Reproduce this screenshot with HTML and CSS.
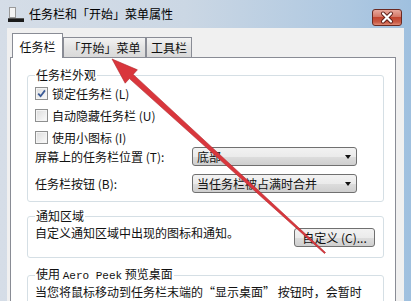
FILE: index.html
```html
<!DOCTYPE html>
<html lang="zh-CN">
<head>
<meta charset="UTF-8">
<meta name="viewport" content="width=device-width, initial-scale=1.0">
<title>任务栏和「开始」菜单属性</title>
<link rel="stylesheet" href="styles.css">
</head>
<body>
  <div class="window">
    <div class="titlebar">
      <svg class="app-icon" width="16" height="16" viewBox="0 0 16 16">
        <rect x="1.5" y="0.5" width="6" height="10" fill="#f4f4f4" stroke="#9a9a9a"/>
        <rect x="0" y="11" width="16" height="4" fill="#1b1b1b"/>
        <rect x="0" y="11" width="16" height="1" fill="#555"/>
      </svg>
      <span class="title">任务栏和「开始」菜单属性</span>
      <div class="close-btn">
        <svg width="28" height="15" viewBox="0 0 28 15">
          <path d="M10 3.5 L18 11.5 M18 3.5 L10 11.5" stroke="#5b1e18" stroke-width="4" stroke-linecap="round"/>
          <path d="M10 3.5 L18 11.5 M18 3.5 L10 11.5" stroke="#fff" stroke-width="2.2" stroke-linecap="round"/>
        </svg>
      </div>
    </div>

    <div class="client">
      <div class="tabs">
        <div class="tab active">任务栏</div>
        <div class="tab tab-start">「开始」菜单</div>
        <div class="tab tab-tools">工具栏</div>
      </div>

      <div class="panel">
        <fieldset class="group group-look">
          <legend>任务栏外观</legend>
          <label class="check">
            <span class="box checked">
              <svg width="9" height="9" viewBox="0 0 9 9"><path d="M1.2 4.6 L3.6 7.2 L8 1.4" fill="none" stroke="#3c5b96" stroke-width="1.8"/></svg>
            </span>锁定任务栏 (L)
          </label>
          <label class="check"><span class="box"></span>自动隐藏任务栏 (U)</label>
          <label class="check"><span class="box"></span>使用小图标 (I)</label>
          <div class="field field-first">
            <span>屏幕上的任务栏位置 (T):</span>
            <div class="select">底部<span class="caret"></span></div>
          </div>
          <div class="field">
            <span>任务栏按钮 (B):</span>
            <div class="select">当任务栏被占满时合并<span class="caret"></span></div>
          </div>
        </fieldset>

        <fieldset class="group group-notify">
          <legend>通知区域</legend>
          <div class="notify-row">
            <span class="notify-text">自定义通知区域中出现的图标和通知。</span>
            <div class="button">自定义 (C)...</div>
          </div>
        </fieldset>

        <fieldset class="group group-peek">
          <legend>使用 <span class="mono">Aero Peek</span> 预览桌面</legend>
          <p class="peek-text">当您将鼠标移动到任务栏末端的“显示桌面” 按钮时，会暂时<br>查看桌面。</p>
        </fieldset>
      </div>
    </div>

    <!-- red annotation arrow drawn over the dialog -->
    <svg class="arrow" width="411" height="301" viewBox="0 0 411 301">
      <polygon points="112,59 125.2,83.2 129.4,78.6 324.5,253.5 325.5,252.5 133.2,74.4 137.4,69.8"
               fill="#d9363c" stroke="#b0262b" stroke-width="0.6" stroke-linejoin="round"/>
    </svg>
  </div>
</body>
</html>
```

FILE: styles.css
```css
html, body {
  margin: 0;
  padding: 0;
}

body {
  width: 411px;
  height: 301px;
  overflow: hidden;
  font-family: "Noto Sans CJK SC", "Noto Sans", sans-serif;
  font-size: 12px;
  color: #111;
}

.window {
  position: relative;
  width: 411px;
  height: 301px;
  display: flex;
  flex-direction: column;
  background: linear-gradient(to right, #d5dde7 0%, #cbd7e4 45%, #aec8e1 85%, #9fc0df 100%);
}

.titlebar {
  height: 28px;
  display: flex;
  align-items: center;
  padding-left: 8px;
  flex-shrink: 0;
}

.app-icon {
  margin-top: 1px;
}

.title {
  margin-left: 5px;
  line-height: 14px;
  color: #000;
}

.close-btn {
  margin-left: auto;
  margin-right: 9px;
  margin-top: 7px;
  width: 28px;
  height: 15px;
  border: 1px solid #6a2a22;
  border-radius: 3px;
  background: linear-gradient(#e9a99d 0%, #d47867 45%, #c2452f 50%, #c85a45 80%, #e08a74 100%);
  display: flex;
}

.client {
  flex: 1;
  margin: 0 7px;
  background: #f0f0f0;
  padding: 5px 8px 0 3px;
  display: flex;
  flex-direction: column;
  overflow: hidden;
}

/* tab strip */
.tabs {
  display: flex;
  align-items: flex-end;
  height: 24px;
  padding-left: 2px;
  flex-shrink: 0;
}

.tab {
  box-sizing: border-box;
  height: 20px;
  border: 1px solid #898c95;
  border-bottom: none;
  background: linear-gradient(#f3f3f3, #e3e3e3 50%, #d9d9d9);
  text-align: center;
  line-height: 19px;
  color: #111;
}

.tab.active {
  position: relative;
  z-index: 1;
  width: 51px;
  height: 25px;
  margin-bottom: -1px;
  background: #fff;
  line-height: 26px;
}

.tab-start {
  width: 83px;
}

.tab-tools {
  width: 46px;
}

.panel {
  flex: 1;
  background: #fff;
  border: 1px solid #898c95;
  border-bottom: none;
  padding: 10px 11px 0 16px;
}

/* group boxes */
.group {
  margin: 0;
  min-width: 0;
  border: 1px solid #d5dfe5;
  border-radius: 3px;
  padding: 0 7px;
}

.group legend {
  padding: 0 1px;
  line-height: 14px;
}

.mono {
  font-family: "Liberation Mono", monospace;
  font-size: 11px;
}

.group-look {
  padding-bottom: 8px;
}

.check {
  display: flex;
  align-items: center;
  height: 22px;
  gap: 4px;
}

.box {
  box-sizing: border-box;
  width: 13px;
  height: 13px;
  border: 1px solid #8e8f8f;
  background: linear-gradient(135deg, #dcdcdc, #fbfbfb);
  box-shadow: inset 0 0 0 1px #f4f4f4;
  display: flex;
  align-items: center;
  justify-content: center;
}

.field {
  display: grid;
  grid-template-columns: 157px 165px;
  align-items: center;
  height: 19px;
  margin-top: 8px;
}

.field-first {
  margin-top: -1px;
}

.select {
  box-sizing: border-box;
  height: 19px;
  border: 1px solid #707070;
  border-radius: 3px;
  background: linear-gradient(#f2f2f2 0%, #ebebeb 50%, #dddddd 51%, #cfcfcf 100%);
  padding-left: 4px;
  line-height: 17px;
  display: flex;
  align-items: center;
}

.caret {
  margin-left: auto;
  margin-right: 5px;
  width: 0;
  height: 0;
  border-left: 3.5px solid transparent;
  border-right: 3.5px solid transparent;
  border-top: 4px solid #111;
}

.group-notify {
  margin-top: 7px;
  padding-right: 8px;
  padding-bottom: 10px;
}

.notify-row {
  display: flex;
  align-items: flex-start;
}

.notify-text {
  line-height: 20px;
}

.button {
  box-sizing: border-box;
  margin-left: auto;
  margin-top: 5px;
  width: 81px;
  height: 19px;
  border: 1px solid #707070;
  border-radius: 3px;
  background: linear-gradient(#f2f2f2 0%, #ebebeb 50%, #dddddd 51%, #cfcfcf 100%);
  text-align: center;
  line-height: 17px;
}

.group-peek {
  margin-top: 9px;
}

.peek-text {
  margin: 0;
  padding-top: 1px;
  line-height: 16px;
}

.arrow {
  position: absolute;
  top: 0;
  left: 0;
  pointer-events: none;
  z-index: 5;
}
```
